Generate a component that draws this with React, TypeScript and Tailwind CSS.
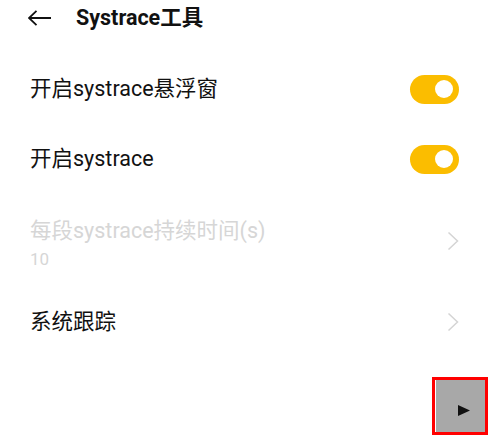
import React from "react";

const font = { fontFamily: '"Roboto", "Noto Sans CJK SC", sans-serif' };

const Toggle: React.FC = () => (
  <div className="flex h-[29px] w-[49px] items-center justify-end rounded-full bg-[#fbbd00] pr-[6px]">
    <div className="h-[18px] w-[18px] rounded-full bg-white" />
  </div>
);

const Chevron: React.FC = () => (
  <svg width="12" height="20" viewBox="0 0 12 20" fill="none">
    <path d="M1.5 1.5 L10.5 10 L1.5 18.5" stroke="#d4d4d4" strokeWidth="1.5" />
  </svg>
);

const App: React.FC = () => {
  return (
    <div
      className="relative h-[443px] w-[489px] overflow-hidden bg-white text-[#111]"
      style={font}
    >
      {/* header */}
      <div className="flex h-[36px] items-center">
        <svg className="ml-[28px]" width="24" height="16" viewBox="0 0 24 16" fill="none">
          <path d="M1 8 H23 M8.5 0.8 L1 8 L8.5 15.2" stroke="#111" strokeWidth="1.8" />
        </svg>
        <span className="ml-[24px] text-[21.5px] font-bold">Systrace工具</span>
      </div>

      <div className="mt-[18px] flex flex-col">
        <div className="flex h-[70px] items-center justify-between pl-[30px] pr-[30px]">
          <span className="text-[21.5px]">开启systrace悬浮窗</span>
          <Toggle />
        </div>
        <div className="flex h-[70px] items-center justify-between pl-[30px] pr-[30px]">
          <span className="text-[21.5px]">开启systrace</span>
          <Toggle />
        </div>
        <div className="flex h-[94px] items-center justify-between pl-[30px] pr-[30px]">
          <div className="flex flex-col pt-[4px]">
            <span className="text-[21.5px] leading-[28px] text-[#d6d6d6]">
              每段systrace持续时间(s)
            </span>
            <span className="mt-[3px] text-[17px] leading-[22px] text-[#d6d6d6]">10</span>
          </div>
          <Chevron />
        </div>
        <div className="flex h-[68px] items-center justify-between pl-[30px] pr-[30px]">
          <span className="text-[21.5px]">系统跟踪</span>
          <Chevron />
        </div>
      </div>

      {/* floating trace button */}
      <button className="absolute bottom-[8px] right-[1px] flex h-[58px] w-[56px] border-[3px] border-[#ff0000] bg-white p-0">
        <div className="ml-[1px] flex h-full flex-1 items-start bg-[#a8a8a8] pl-[22px] pt-[25px]">
          <svg width="12" height="11" viewBox="0 0 12 11">
            <path d="M0 0 L12 5.5 L0 11 Z" fill="#111" />
          </svg>
        </div>
      </button>
    </div>
  );
};

export default App;
